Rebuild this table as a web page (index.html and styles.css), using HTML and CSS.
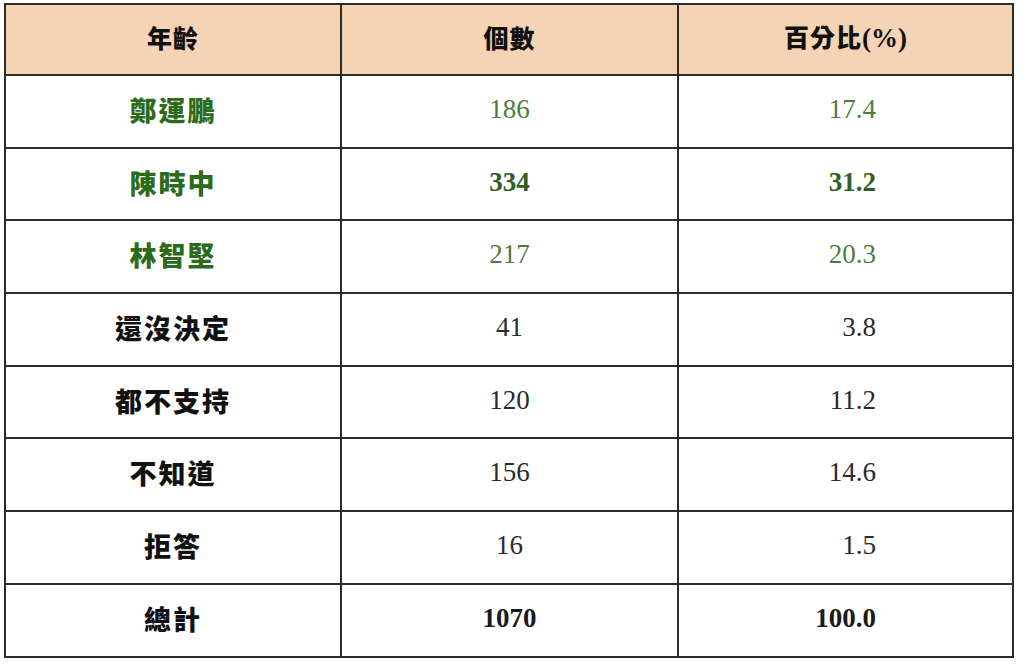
FILE: index.html
```html
<!DOCTYPE html>
<html lang="zh-Hant">
<head>
<meta charset="utf-8">
<title>支持度</title>
<link rel="stylesheet" href="styles.css">
</head>
<body>
<table class="poll">
  <colgroup>
    <col class="c1"><col class="c2"><col class="c3">
  </colgroup>
  <thead>
    <tr class="head">
      <th>年齡</th>
      <th>個數</th>
      <th>百分比<span class="latin">(%)</span></th>
    </tr>
  </thead>
  <tbody>
    <tr class="green">
      <td class="name">鄭運鵬</td><td class="num">186</td><td class="pct">17.4</td>
    </tr>
    <tr class="green strong">
      <td class="name">陳時中</td><td class="num">334</td><td class="pct">31.2</td>
    </tr>
    <tr class="green">
      <td class="name">林智堅</td><td class="num">217</td><td class="pct">20.3</td>
    </tr>
    <tr>
      <td class="name">還沒決定</td><td class="num">41</td><td class="pct">3.8</td>
    </tr>
    <tr>
      <td class="name">都不支持</td><td class="num">120</td><td class="pct">11.2</td>
    </tr>
    <tr>
      <td class="name">不知道</td><td class="num">156</td><td class="pct">14.6</td>
    </tr>
    <tr>
      <td class="name">拒答</td><td class="num">16</td><td class="pct">1.5</td>
    </tr>
    <tr class="strong">
      <td class="name">總計</td><td class="num">1070</td><td class="pct">100.0</td>
    </tr>
  </tbody>
</table>
</body>
</html>
```

FILE: styles.css
```css
html, body {
  margin: 0;
  padding: 0;
  background: #ffffff;
}

body {
  padding: 3px 0 0 4px;
  font-family: "Liberation Serif", "Noto Sans CJK TC", serif;
  color: #1a1a1a;
}

.poll {
  border-collapse: collapse;
  width: 1008px;
  table-layout: fixed;
}

.c1 { width: 336px; }
.c2 { width: 337px; }
.c3 { width: 335px; }

.poll tr {
  height: 72.7px;
}

.poll tr.head {
  height: 71px;
}

.poll th,
.poll td {
  border: 2px solid #2b2b2b;
  padding: 0 0 4px 0;
  text-align: center;
  vertical-align: middle;
  font-size: 27px;
  line-height: 1;
}

.head th {
  background: #f5d3b5;
  font-family: "Noto Sans CJK TC", sans-serif;
  font-weight: 900;
  font-size: 25px;
  letter-spacing: 1px;
  color: #111111;
}

.head .latin {
  font-family: "Liberation Serif", serif;
  font-weight: 700;
  font-size: 27px;
  letter-spacing: 0;
}

.name {
  font-family: "Noto Sans CJK TC", sans-serif;
  font-weight: 900;
  font-size: 25px;
  letter-spacing: 2px;
  color: #111111;
}

.num {
  color: #2a2a2a;
}

.pct {
  text-align: right !important;
  padding-right: 136px !important;
  color: #2a2a2a;
}

.green .name {
  color: #2c6a1c;
}

.green .num,
.green .pct {
  color: #4b7c42;
}

.strong .num,
.strong .pct {
  font-weight: 700;
  color: #1a1a1a;
}

.green.strong .num,
.green.strong .pct {
  color: #2f5f24;
}
```
